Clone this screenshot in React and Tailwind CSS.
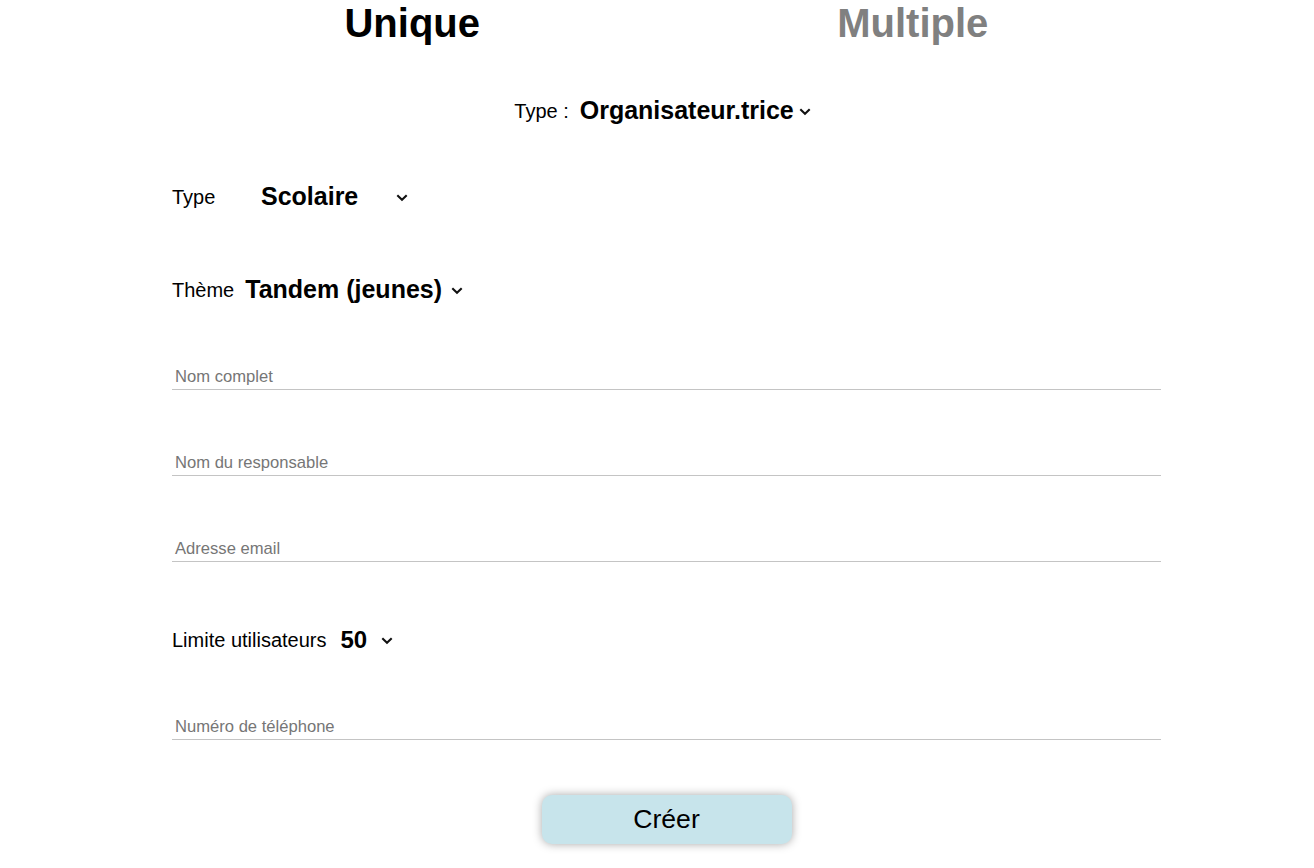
import React from "react";

function Chevron({ className = "" }) {
  return (
    <svg className={className} width="12" height="8" viewBox="0 0 12 8" fill="none">
      <path d="M1.3 1.3 L6 5.8 L10.7 1.3" stroke="#111" strokeWidth="2.1" strokeLinecap="butt" strokeLinejoin="miter" />
    </svg>
  );
}

function Field({ placeholder, className = "" }) {
  return (
    <div className={"h-[25px] border-b border-[#c4c4c4] flex items-center pl-[3px] " + className}>
      <span className="text-[16.6px] text-[#767676] leading-none">{placeholder}</span>
    </div>
  );
}

export default function App() {
  return (
    <div className="min-h-[868px] bg-white text-black font-['Liberation_Sans',Arial,sans-serif]">
      <div className="ml-[162px] w-[1001px]">
        <div className="grid grid-cols-2 text-center h-[46px] items-center">
          <div className="text-[40px] font-bold leading-[46px] text-black">Unique</div>
          <div className="text-[40px] font-bold leading-[46px] text-[#808080]">Multiple</div>
        </div>

        <div className="mt-[50px] h-[30px] flex items-center justify-center">
          <span className="text-[20px] mr-[11px]">Type :</span>
          <span className="text-[25px] font-bold">Organisateur.trice</span>
          <Chevron className="ml-[5px] mt-[2px]" />
        </div>

        <div className="ml-[10px] w-[989px]">
          <div className="mt-[56px] h-[30px] flex items-center">
            <span className="text-[20px] w-[89px]">Type</span>
            <span className="text-[25px] font-bold w-[135px]">Scolaire</span>
            <Chevron className="mt-[1px]" />
          </div>

          <div className="mt-[63px] h-[30px] flex items-center">
            <span className="text-[20px] mr-[11px]">Thème</span>
            <span className="text-[25px] font-bold">Tandem (jeunes)</span>
            <Chevron className="ml-[9px] mt-[1px]" />
          </div>

          <Field className="mt-[60px]" placeholder="Nom complet" />
          <Field className="mt-[61px]" placeholder="Nom du responsable" />
          <Field className="mt-[61px]" placeholder="Adresse email" />

          <div className="mt-[63px] h-[30px] flex items-center">
            <span className="text-[20px] mr-[14px]">Limite utilisateurs</span>
            <span className="text-[24px] font-bold">50</span>
            <Chevron className="ml-[14px] mt-[1px]" />
          </div>

          <Field className="mt-[60px]" placeholder="Numéro de téléphone" />

          <div className="mt-[55px] flex justify-center">
            <button className="w-[250px] h-[49px] rounded-[10px] bg-[#c7e4eb] text-[26.6px] text-black shadow-[0_0_10px_rgba(0,0,0,0.35)]">
              Créer
            </button>
          </div>
        </div>
      </div>
    </div>
  );
}
